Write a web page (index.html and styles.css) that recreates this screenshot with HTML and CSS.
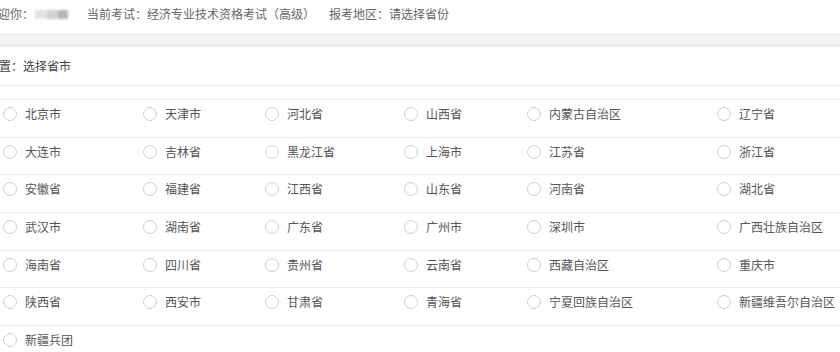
FILE: index.html
```html
<!DOCTYPE html>
<html lang="zh-CN">
<head>
<meta charset="utf-8">
<title>选择省市</title>
<link rel="stylesheet" href="styles.css">
</head>
<body>
<div class="topbar">
  <span class="welcome">欢迎你：</span>
  <span class="name"><i class="b1"></i><i class="b2"></i><i class="b3"></i></span>
  <span class="exam">当前考试：经济专业技术资格考试（高级）</span>
  <span class="area">报考地区：请选择省份</span>
</div>
<div class="band"></div>
<div class="header">位置：选择省市</div>
<div class="list">
  <div class="row">
    <label class="item"><span class="radio"></span>北京市</label>
    <label class="item"><span class="radio"></span>天津市</label>
    <label class="item"><span class="radio"></span>河北省</label>
    <label class="item"><span class="radio"></span>山西省</label>
    <label class="item"><span class="radio"></span>内蒙古自治区</label>
    <label class="item"><span class="radio"></span>辽宁省</label>
  </div>
  <div class="row">
    <label class="item"><span class="radio"></span>大连市</label>
    <label class="item"><span class="radio"></span>吉林省</label>
    <label class="item"><span class="radio"></span>黑龙江省</label>
    <label class="item"><span class="radio"></span>上海市</label>
    <label class="item"><span class="radio"></span>江苏省</label>
    <label class="item"><span class="radio"></span>浙江省</label>
  </div>
  <div class="row">
    <label class="item"><span class="radio"></span>安徽省</label>
    <label class="item"><span class="radio"></span>福建省</label>
    <label class="item"><span class="radio"></span>江西省</label>
    <label class="item"><span class="radio"></span>山东省</label>
    <label class="item"><span class="radio"></span>河南省</label>
    <label class="item"><span class="radio"></span>湖北省</label>
  </div>
  <div class="row">
    <label class="item"><span class="radio"></span>武汉市</label>
    <label class="item"><span class="radio"></span>湖南省</label>
    <label class="item"><span class="radio"></span>广东省</label>
    <label class="item"><span class="radio"></span>广州市</label>
    <label class="item"><span class="radio"></span>深圳市</label>
    <label class="item"><span class="radio"></span>广西壮族自治区</label>
  </div>
  <div class="row">
    <label class="item"><span class="radio"></span>海南省</label>
    <label class="item"><span class="radio"></span>四川省</label>
    <label class="item"><span class="radio"></span>贵州省</label>
    <label class="item"><span class="radio"></span>云南省</label>
    <label class="item"><span class="radio"></span>西藏自治区</label>
    <label class="item"><span class="radio"></span>重庆市</label>
  </div>
  <div class="row">
    <label class="item"><span class="radio"></span>陕西省</label>
    <label class="item"><span class="radio"></span>西安市</label>
    <label class="item"><span class="radio"></span>甘肃省</label>
    <label class="item"><span class="radio"></span>青海省</label>
    <label class="item"><span class="radio"></span>宁夏回族自治区</label>
    <label class="item"><span class="radio"></span>新疆维吾尔自治区</label>
  </div>
  <div class="row">
    <label class="item"><span class="radio"></span>新疆兵团</label>
  </div>
</div>
</body>
</html>
```
FILE: styles.css
```css
html, body {
  margin: 0;
  padding: 0;
  background: #fff;
  overflow: hidden;
}
body {
  font-family: "Noto Sans CJK SC", "Microsoft YaHei", sans-serif;
  font-size: 12px;
  color: #555;
}
.topbar {
  display: flex;
  align-items: flex-start;
  height: 33px;
  line-height: 28px;
  margin-left: -14px;
  color: #666;
  white-space: nowrap;
}
.name {
  display: flex;
  align-items: center;
  width: 40px;
  height: 28px;
  margin-right: 13px;
  filter: blur(1.2px);
}
.name i {
  display: block;
  height: 9px;
}
.name .b1 { width: 12px; background: #e4e4e4; margin-left: 1px; }
.name .b2 { width: 11px; background: #d2d2d2; }
.name .b3 { width: 10px; background: #b8b8b8; }
.area {
  margin-left: 14px;
}
.band {
  height: 11px;
  background: #f3f3f3;
  border-bottom: 3px solid #e9edf0;
}
.header {
  height: 38px;
  line-height: 38px;
  margin-left: -13px;
  color: #444;
  border-bottom: 1px solid #ececec;
}
.list {
  margin-top: 13px;
}
.row {
  display: grid;
  grid-template-columns: 140px 122px 139px 123px 190px 1fr;
  box-sizing: border-box;
  height: 37.67px;
  padding: 4px 0 0 3px;
  border-top: 1px solid #ececec;
}
.item {
  display: flex;
  align-items: center;
  height: 20px;
  line-height: 20px;
  white-space: nowrap;
  color: #555;
}
.radio {
  box-sizing: border-box;
  width: 14px;
  height: 14px;
  border: 1px solid #cfcfcf;
  border-radius: 50%;
  margin-right: 8px;
  flex: none;
  background: #fff;
}
```
